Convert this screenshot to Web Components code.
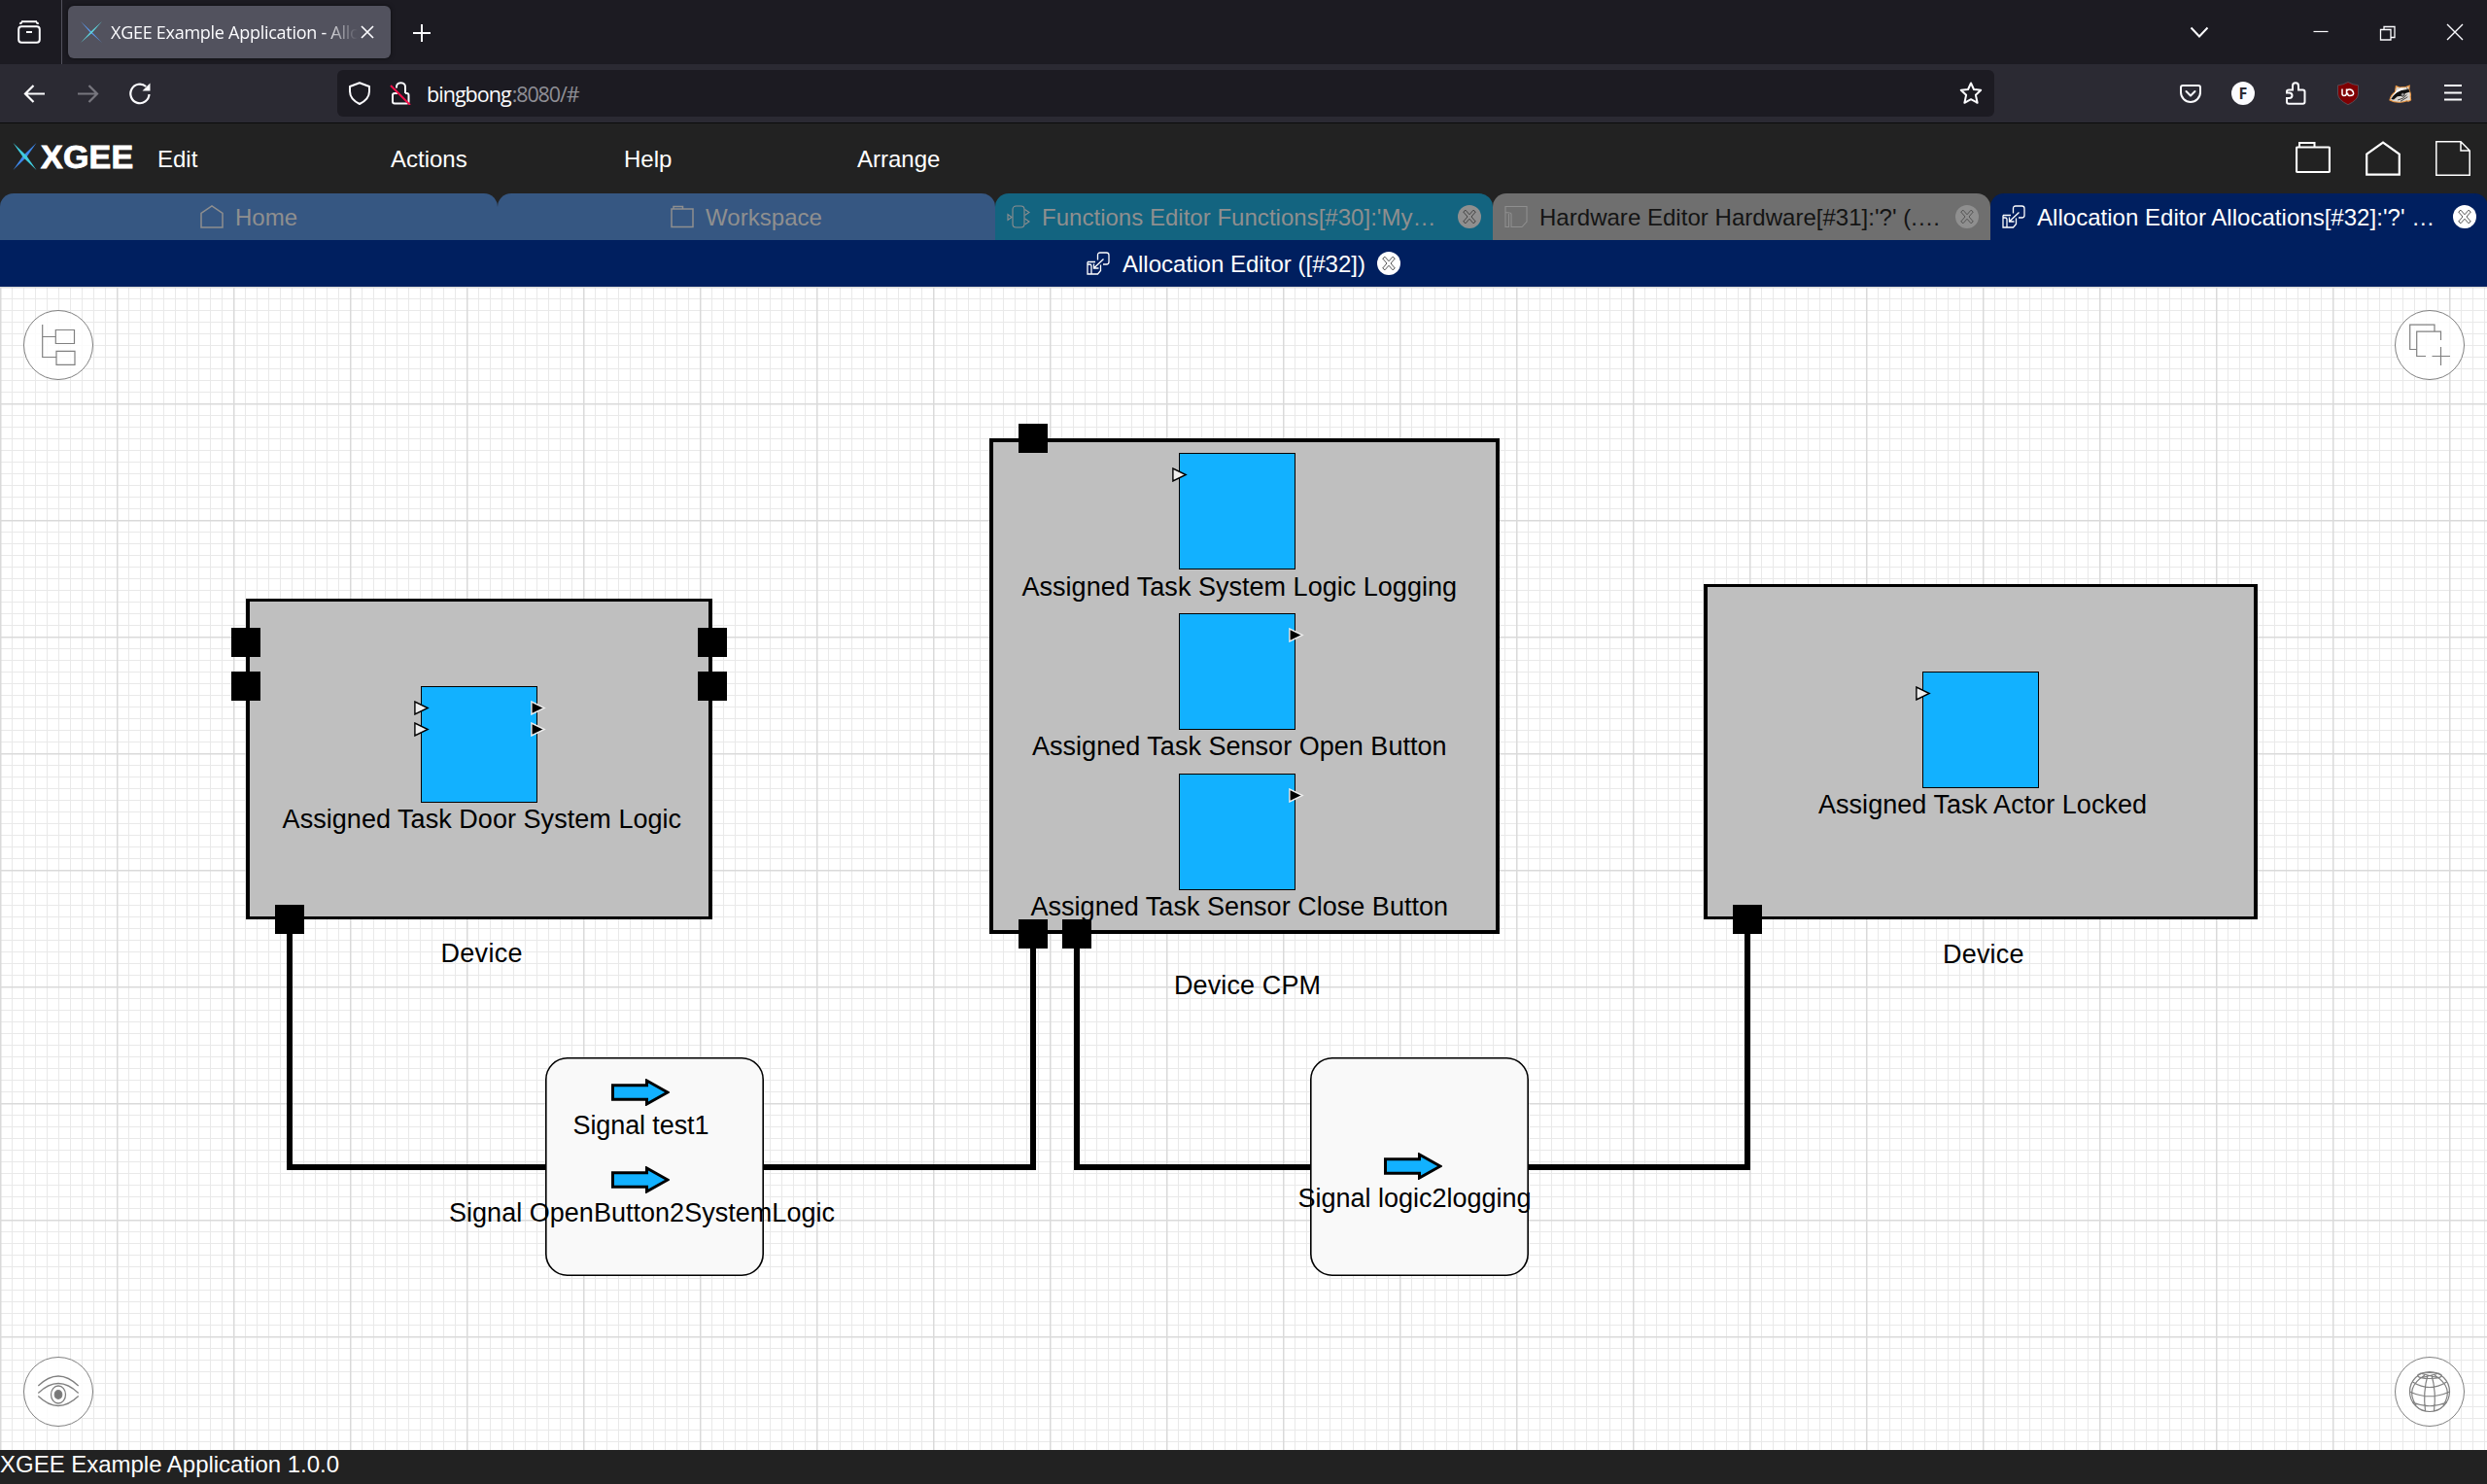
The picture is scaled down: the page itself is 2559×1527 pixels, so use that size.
<!DOCTYPE html>
<html lang="en">
<head>
<meta charset="utf-8">
<title>XGEE Example Application</title>
<style>
html,body{margin:0;padding:0;width:2559px;height:1527px;overflow:hidden;background:#fff;font-family:"Liberation Sans",Arial,sans-serif}
</style>
</head>
<body>
<xgee-window></xgee-window>
<script>
const ICONS = {
library:['0 0 24 24','<path d="M4 1.2h16" /><rect x="1.2" y="6.2" width="21.6" height="16.6" rx="3"/><path d="M5 2.2q-2 0-2.2 1.6M19 2.2q2 0 2.200 1.600M9 12h6"/>',2],
xmark:['0 0 24 24','<path d="M1 1L12.500 12L23 23L10.500 12Z" fill="#5b9df5" stroke="none"/><path d="M23 1L13 12.500L1 23L11.500 11.500Z" fill="#5ed4dc" stroke="none"/>',1],
logo:['0 0 25 28','<path d="M24.500 0L14.300 14.800L.5 28L10.700 13.200Z" fill="#3d86e8" stroke="none"/><path d="M.5 0L14.300 13.200L24.500 28L10.700 14.800Z" fill="#3fcbdc" stroke="none"/>',1],
close:['0 0 24 24','<path d="M6 6l12 12M18 6L6 18"/>',1.7],
plus:['0 0 24 24','<path d="M12 3v18M3 12h18"/>',2],
back:['0 0 24 24','<path d="M2 12.500h20M10.500 4L2 12.500L10.500 21"/>',2.2],
fwd:['0 0 24 24','<path d="M2 12.500h20M13.500 4L22 12.500L13.500 21"/>',2.2],
reload:['0 0 24 24','<path d="M21.500 13a9.600 9.800 0 1 1-3.300-8"/><path d="M22.500 1.500v8h-8z" fill="currentColor" stroke="none"/>',2.2],
shield:['0 0 24 24','<path d="M12 1.200L22 5v5c0 6-4 10-10 13C6 20 2 16 2 10V5z" stroke-linejoin="round"/>',2],
lock:['0 0 24 24','<path d="M8 6.500Q7.500 1.200 12.500 1.200T17 6.500V12"/><path d="M17 12h1.500q2 0 2 2v6.500q0 2-2 2H6q-2 0-2-2V14q0-2 2-2h3"/><path d="M2 4L22 24" stroke="#f4104a"/>',2],
star:['0 0 24 24','<path d="M12 1.500l3 6.500 7.200.7-5.300 5.100 1.700 8L12 18.200 5.400 21.800l1.700-8L1.800 8.700 9 8z" stroke-linejoin="round"/>',2],
chev:['0 0 24 24','<path d="M3.500 7.500L12 16.500L20.500 7.500"/>',2],
min:['0 0 24 24','<path d="M4.500 11.500h15"/>',1.2],
restore:['0 0 24 24','<path d="M4.500 9.500h10.500v10.500H4.500zM8 9V6.500h11v11h-3.500"/>',1.3],
winclose:['0 0 24 24','<path d="M4 4L20 20M20 4L4 20"/>',1.4],
pocket:['0 0 24 24','<path d="M4 4h16q2 0 2 2v5a10 10 0 0 1-20 0V6q0-2 2-2zM7.500 10l4.500 4.500L16.500 10" stroke-linecap="round" stroke-linejoin="round"/>',2],
puzzle:['0 0 24 24','<path d="M9 8.500V4.500Q9 1.300 12 1.300T15 4.500V8.500H19.500q2 0 2 2V20.700q0 2-2 2H5q-2 0-2-2V17H5.500Q8.500 17 8.500 14.300T5.500 11.500H3V10q0-1.500 2-1.500z"/>',2],
ublock:['0 0 24 24','<path d="M12 .5Q17 3.300 22.500 3.800V13Q22 19 12 23.700Q2 19 1.500 13V3.800Q7 3.300 12 .5z" fill="#7f0003" stroke="#5a5560" stroke-width=".8"/><path d="M6 7.500v5q0 2 2 2t2.500-2v-5M10.500 12.500V10.500q0-2.500 3-2.500t4 3.200-4 3.300q-2 0-2-3" stroke="#fff" stroke-width="1.500"/>',1],
badger:['0 0 26 24','<path d="M1 19.500Q2 14 7 10.500L8 4l4 1.500 7-.5 4-1.500-.5 4.500q2.500 5 1.500 7.500l.5 4q-2 2-4.500 1-3 1.500-7 1.500-7 .5-12-2.500z" fill="#dcd8d2" stroke="#e8923d" stroke-width="1.200"/><path d="M2.500 18.500Q6 12 13 9l9-1.500 1.500 3-5 1.500-4 3-5 .5-4 3.500z" fill="#111" stroke="none"/><path d="M8 9.500l5-3.500 5 .5-9 4.500-5 4z" fill="#fff" stroke="none"/><circle cx="15.500" cy="13.500" r="2" fill="#999" stroke="#111" stroke-width=".8"/><path d="M10 19.500l6-2 4-4M13 21l8-5M20 6l2 3" stroke="#333" stroke-width="1"/>',1],
menu:['0 0 24 24','<path d="M3 4h18M3 11.500h18M3 18.500h18"/>',2.2],
folder:['0 0 36 36','<path d="M4 6V2H19.500V6" stroke-width="2"/><path d="M2 6.500h32q1 0 1 1V31q0 1-1 1H2q-1 0-1-1V7.500q0-1 1-1z"/>',2.2],
home:['0 0 36 36','<path d="M1.200 34.700V13.500L18 1.500L34.800 13.500V34.700Z"/>',2.2],
file:['0 0 36 36','<path d="M.8.8H26L35.200 10V35.200H.8ZM26 .8V10h9.200"/>',1.5],
tfolder:['0 0 24 24','<path d="M3 4V1.500H12.500V4M1 4h22v18.500H1z"/>',1.500],
thome:['0 0 24 24','<path d="M1 23V8.500L12 1L23 8.500V23Z"/>',1.500],
func:['0 0 24 24','<rect x="6" y="1" width="12" height="22" rx="3.500"/><path d="M1 9.500v6l4-3zM18.500 4.500l4.500 3-4.500 3M18.500 14l4.500 3-4.500 3"/>',1.100],
hard:['0 0 24 24','<path d="M1 1.500H23V17L18 22.500H7V9.500Q7 8 5.500 8L1 7.500zM1 6.500V22.500H4.500V9"/>',1.100],
alloc:['0 0 24 24','<path d="M11.500 8.500V3.500Q11.500 1 14 1H20.500Q23 1 23 3.500V10.500Q23 13 20.500 13H17"/><path d="M1 10.500H9M1 10.500V23H5V14.500Q5 13 3 13H1M5 23H11.500L14.500 19.500V13.500M17.500 7.500L8 16.500M7.500 12.500V17H12.500"/>',1.300],
tree:['0 0 72 72','<path d="M19.700 15V48.500H33.500M19.700 27.500H33.300M33.300 20.500H52.500V34.500H33.300zM34 42.300H53V56.300H34z"/>',1.200],
copy:['0 0 72 72','<path d="M41 22V15.200H15.700V40.500H22.500M47.500 31V22.200H22.700V47.500H32M47.500 38V57M38.500 47.500H57"/>',1.200],
eye:['0 0 72 72','<path d="M15.300 30Q36 10 56.700 30M15.300 37.500Q36 17.500 56.700 37.500M15.300 40.500Q36 60.500 56.700 40.500"/><ellipse cx="36" cy="39" rx="7.500" ry="9"/><ellipse cx="36" cy="39" rx="3.700" ry="4.300" fill="#777"/>',1.300],
globe:['0 0 72 72','<circle cx="36" cy="36" r="20.500"/><ellipse cx="36" cy="19.500" rx="12.500" ry="3"/><path d="M31 19Q10 32 22 50M34 19Q29 36 31.500 56M38 19Q43 36 40.500 56M41 19Q62 32 50 50M18.500 26Q36 37 53.500 26M15.500 36Q36 45.500 56.500 36M18.500 47Q36 54.500 53.500 47M26 17l20 5M46 17l-20 5"/>',1.200]
};
const define=(name,cls)=>customElements.define(name,cls);
class Base extends HTMLElement{
  a(n,d=''){return this.hasAttribute(n)?this.getAttribute(n):d}
  connectedCallback(){
    if(!this.shadowRoot)this.attachShadow({mode:'open'}).innerHTML=this.render();
    this.ready&&this.ready();
  }
}
const meter=document.createElement('canvas').getContext('2d');

define('ui-icon',class extends Base{
  render(){const [vb,body,sw]=ICONS[this.a('name')];const w=this.a('w','24'),h=this.a('h',w);
    return `<style>:host{display:block;flex:none;width:${w}px;height:${h}px}svg{display:block}</style><svg width="${w}" height="${h}" viewBox="${vb}" fill="none" stroke="currentColor" stroke-width="${sw}">${body}</svg>`}
});
/* Text run whose tracking is adjusted so that its ink is "w" pixels wide. */
define('fit-text',class extends Base{
  render(){return '<style>:host{display:block;flex:none;white-space:pre}</style><slot></slot>'}
  ready(){
    const cs=getComputedStyle(this),t=this.textContent,w=+this.a('w','0');
    meter.font=`${cs.fontWeight} ${cs.fontSize} ${cs.fontFamily}`;
    const m=meter.measureText(t),ink=m.actualBoundingBoxRight+m.actualBoundingBoxLeft;
    if(w)this.style.letterSpacing=((w-ink)/(t.length-1)).toFixed(3)+'px';
    this.style.marginLeft=(parseFloat(this.a('dx','0')))+'px';
  }
});
define('close-badge',class extends Base{
  render(){const c=this.a('line','#222');
   return `<style>:host{display:block;flex:none;width:24px;height:24px}svg{display:block}</style><svg width="24" height="24" viewBox="0 0 24 24"><circle cx="12" cy="12" r="12" fill="currentColor"/><path d="M12 9.800L16 5.200L18.300 7L14 12L18.300 17L16 18.800L12 14.200L8 18.800L5.700 17L10 12L5.700 7L8 5.200Z" fill="none" stroke="${c}" stroke-width="1"/></svg>`}
});
define('browser-tabs',class extends Base{
  render(){return `<style>
  :host{display:flex;align-items:center;height:66px;background:#1c1b22;color:#fbfbfe;font-family:"Open Sans","Noto Sans",sans-serif;box-sizing:border-box;padding-right:21px}
  .lib{display:flex;align-items:center;height:66px;border-right:1px solid #52515c;padding-left:18px;box-sizing:border-box;width:64px}
  .tab{display:flex;align-items:center;width:332px;height:54px;margin-left:6px;background:#52525e;border-radius:6px;box-sizing:border-box;padding-left:12px;box-shadow:0 0 4px #0008}
  .t{width:254px;margin-left:8px;overflow:hidden;font-size:18px;-webkit-mask-image:linear-gradient(90deg,#000 86%,#0000);mask-image:linear-gradient(90deg,#000 86%,#0000)}
  .sp{flex:1}.wc{display:flex;gap:45px;margin-left:101px}</style>
  <div class="lib"><ui-icon name="library"></ui-icon></div>
  <div class="tab"><ui-icon name="xmark"></ui-icon><div class="t"><fit-text w="256">XGEE Example Application - Allo</fit-text></div><ui-icon name="close" style="margin-left:-2px"></ui-icon></div>
  <ui-icon name="plus" style="margin-left:20px;margin-top:2px"></ui-icon><div class="sp"></div><ui-icon name="chev"></ui-icon>
  <div class="wc"><ui-icon name="min"></ui-icon><ui-icon name="restore"></ui-icon><ui-icon name="winclose"></ui-icon></div>`}
});
define('browser-toolbar',class extends Base{
  render(){return `<style>
  :host{display:flex;align-items:center;height:61px;background:#2b2a33;border-bottom:1px solid #0c0c0d;color:#fbfbfe;box-sizing:border-box;padding:0 23px 0 24px;font-family:"Open Sans","Noto Sans",sans-serif}
  .nav,.ext{display:flex;gap:30px}
  .url{display:flex;align-items:center;width:1705px;height:48px;margin-left:191px;border-radius:6px;background:#1c1b22;box-sizing:border-box;padding:0 12px 0 11px;font-size:21.5px}
  .url fit-text{margin-top:1px}
  .sp{flex:1}
  .f{display:flex;align-items:center;justify-content:center;width:24px;height:24px;border-radius:50%;background:#fbfbfe;color:#2b2a33;font:bold 16px "Open Sans"}</style>
  <div class="nav"><ui-icon name="back"></ui-icon><ui-icon name="fwd" style="color:#77767e"></ui-icon><ui-icon name="reload"></ui-icon></div>
  <div class="url"><ui-icon name="shield"></ui-icon><ui-icon name="lock" style="margin-left:18px"></ui-icon><fit-text w="87" dx="15">bingbong</fit-text><fit-text w="69" dx="1" style="color:#8f8f96">:8080/#</fit-text><div class="sp"></div><ui-icon name="star"></ui-icon></div>
  <div class="sp"></div>
  <div class="ext"><ui-icon name="pocket"></ui-icon><div class="f">F</div><ui-icon name="puzzle"></ui-icon><ui-icon name="ublock"></ui-icon><ui-icon name="badger"></ui-icon><ui-icon name="menu"></ui-icon></div>`}
});
define('app-header',class extends Base{
  render(){return `<style>
  :host{display:flex;align-items:center;height:72px;background:#222;color:#fff;box-sizing:border-box;padding:0 17px 0 13px;font-size:24px}
  .brand{display:flex;align-items:center;width:149px}
  .brand ui-icon{margin-top:-4px}
  .name{font:bold 34px "Liberation Sans";line-height:40px;margin-top:-5px;-webkit-text-stroke:.9px #fff}
  nav{display:flex;flex:1;padding-top:1px}nav div{width:240px}.r{display:flex;gap:36px}</style>
  <div class="brand"><ui-icon name="logo" w="25" h="28"></ui-icon><fit-text class="name" w="94.5" dx="4">XGEE</fit-text></div>
  <nav><div>Edit</div><div>Actions</div><div>Help</div><div>Arrange</div></nav>
  <div class="r"><ui-icon name="folder" w="36"></ui-icon><ui-icon name="home" w="36"></ui-icon><ui-icon name="file" w="36"></ui-icon></div>`}
});
define('editor-tab',class extends Base{
  render(){const c=this.hasAttribute('closable'),centered=this.hasAttribute('centered');
  return `<style>:host{display:flex;align-items:center;height:48px;flex:none;width:512px;box-sizing:border-box;padding:0 12px;font-size:24px;border-radius:14px 14px 0 0;${centered?'justify-content:center;gap:12px;':''}}
  fit-text{padding-top:1px}.sp{flex:1}</style>
  <ui-icon name="${this.a('icon')}"></ui-icon><fit-text dx="${this.a('dx',centered?'0':'12')}" ${this.a('w')?`w="${this.a('w')}"`:''}>${this.a('label')}</fit-text>
  ${c?(centered?'':'<div class="sp"></div>')+`<close-badge line="${this.a('line')}"></close-badge>`:''}`}
});
define('tab-strip',class extends Base{
  render(){return `<style>:host{display:block;height:96px;background:#222}
  .row{display:flex;overflow:hidden;height:48px}.sub{background:#001f5f;display:flex;justify-content:center}</style>
  <div class="row">
  <editor-tab centered icon="thome" label="Home" style="background:#365782;color:#8f8f8f"></editor-tab>
  <editor-tab centered icon="tfolder" label="Workspace" w="119.5" style="background:#365782;color:#8f8f8f"></editor-tab>
  <editor-tab closable icon="func" label="Functions Editor Functions[#30]:'My…" w="401.500" line="#444" style="background:#136480;color:#8f8f8f"></editor-tab>
  <editor-tab closable icon="hard" label="Hardware Editor Hardware[#31]:'?' (.…" w="409" line="#555" style="background:#6f6f6f;color:#8f8f8f"></editor-tab>
  <editor-tab closable icon="alloc" label="Allocation Editor Allocations[#32]:'?' …" w="407.500" line="#555" style="background:#001f5f;color:#fff"></editor-tab></div>
  <div class="sub"><editor-tab centered closable icon="alloc" dx="1" label="Allocation Editor ([#32])" w="249" line="#555" style="color:#fff"></editor-tab></div>`}
  ready(){const h=this.shadowRoot.querySelector('[icon=hard]');h.shadowRoot.querySelector('fit-text').style.color='#141414'}
});
/* Diagram elements: placed freely on the canvas by x/y. */
class Placed extends Base{
  box(extra=''){return `<style>:host{display:block;position:absolute;box-sizing:border-box;left:${this.a('x')}px;top:${this.a('y')}px;width:${this.a('w')}px;height:${this.a('h')}px;${extra}}</style>`}
}
define('device-node',class extends Placed{render(){return this.box(`background:#bfbfbf;border:4px solid #000;border-width:${this.a('bt','3')}px 4px`)}});
define('device-port',class extends Base{render(){return `<style>:host{display:block;position:absolute;left:${this.a('x')}px;top:${this.a('y')}px;width:30px;height:30px;background:#000}</style>`}});
define('task-node',class extends Base{render(){return `<style>:host{display:block;position:absolute;box-sizing:border-box;left:${this.a('x')}px;top:${this.a('y')}px;width:120px;height:120px;background:#12b1ff;border:1px solid #000}</style>`}});
define('task-pin',class extends Base{render(){const o=this.hasAttribute('out');return `<style>:host{display:block;position:absolute;left:${this.a('x')}px;top:${this.a('y')}px}svg{display:block}</style><svg width="16" height="15"><path d="M.9 1V14L14.200 7.500Z" fill="${o?'#000':'#eee'}" stroke="${o?'#eee':'#000'}" stroke-width="1.400"/></svg>`}});
define('bus-node',class extends Base{render(){return `<style>:host{display:block;position:absolute;left:${this.a('x')}px;top:${this.a('y')}px}svg{display:block}</style><svg width="225" height="225"><rect x=".8" y=".8" width="223.400" height="223.400" rx="22" fill="#f9f9f9" stroke="#000" stroke-width="1.600"/></svg>`}});
define('signal-arrow',class extends Base{render(){return `<style>:host{display:block;position:absolute;left:${this.a('x')}px;top:${this.a('y')}px}svg{display:block}</style><svg width="60" height="28"><path d="M1.500 6.700H36.500V2L58 14L36.500 26V21.300H1.500Z" fill="#12b1ff" stroke="#000" stroke-width="3"/></svg>`}});
define('wire-layer',class extends Base{render(){return `<style>:host{display:block;position:absolute;inset:0}svg{display:block}</style><svg width="2559" height="1197"><g transform="translate(0 -295)" fill="none" stroke="#000" stroke-width="6"><path d="M298 950V1201H562M785 1201H1063V965M1108 965V1201H1350M1572 1201H1798V950"/></g></svg>`}});
/* Label placed by ink start, baseline and ink width. */
define('node-label',class extends Base{
  render(){return `<style>:host{display:block;position:absolute;white-space:pre;font-size:27px;line-height:32px;color:#000}</style>${this.a('text')}`}
  ready(){const t=this.a('text');meter.font='27px "Liberation Sans"';const m=meter.measureText(t);
    this.style.left=(+this.a('x')+m.actualBoundingBoxLeft)+'px';this.style.top=(+this.a('y')-25)+'px';
    this.style.letterSpacing=((+this.a('w')-m.actualBoundingBoxLeft-m.actualBoundingBoxRight)/(t.length-1)).toFixed(3)+'px'}
});
define('round-button',class extends Base{render(){return `<style>:host{display:block;position:absolute;left:${this.a('x')}px;top:${this.a('y')}px;width:72px;height:72px;box-sizing:border-box;border-radius:50%;border:1px solid #808080;background:#ffffffcc;color:#808080}ui-icon{margin:-1px}</style><ui-icon name="${this.a('icon')}" w="72"></ui-icon>`}});
define('diagram-canvas',class extends Base{
  render(){
    let minor='';for(let i=1;i<10;i++)minor+=`<rect x="${i*12}" y="0" width="1" height="120"/><rect x="0" y="${i*12}" width="120" height="1"/>`;
    const Y=v=>v-295;
    const L=(x,b,w,t)=>`<node-label x="${x}" y="${Y(b)}" w="${w}" text="${t}"></node-label>`;
    const P=(x,y)=>`<device-port x="${x}" y="${Y(y)}"></device-port>`;
    const T=(x,y)=>`<task-node x="${x}" y="${Y(y)}"></task-node>`;
    const N=(x,y,o='')=>`<task-pin ${o} x="${x}" y="${Y(y)}"></task-pin>`;
    const S=(x,y)=>`<signal-arrow x="${x}" y="${Y(y)}"></signal-arrow>`;
    return `<style>:host{display:block;position:relative;height:1197px;overflow:hidden;background:#fff}.g{display:block}</style>
    <svg class="g" width="2559" height="1197"><defs><pattern id="g" width="120" height="120" patternUnits="userSpaceOnUse"><g fill="#e9e9e9">${minor}</g><path d="M0 0H120V1.500H0ZM0 0H1.500V120H0Z" fill="#dadada"/></pattern></defs><rect width="2559" height="1197" fill="url(#g)"/></svg>
    <wire-layer></wire-layer>
    <device-node x="253" y="${Y(616)}" w="480" h="330"></device-node>
    <device-node x="1018" y="${Y(451)}" w="525" h="510" bt="4"></device-node>
    <device-node x="1753" y="${Y(601)}" w="570" h="345"></device-node>
    ${T(433,706)}${T(1213,466)}${T(1213,631)}${T(1213,796)}${T(1978,691)}
    ${N(426,721)}${N(426,743)}${N(546,721,'out')}${N(546,743,'out')}${N(1206,481)}${N(1326,646,'out')}${N(1326,811,'out')}${N(1971,706)}
    <bus-node x="561" y="${Y(1088)}"></bus-node><bus-node x="1348" y="${Y(1088)}"></bus-node>
    ${S(629,1110)}${S(629,1200)}${S(1424,1186)}
    ${L(290.6,852,410.500,'Assigned Task Door System Logic')}${L(455.500,990,81,'Device')}
    ${L(1051.5,613,447,'Assigned Task System Logic Logging')}${L(1062,777,426,'Assigned Task Sensor Open Button')}${L(1060.500,942,429,'Assigned Task Sensor Close Button')}${L(1210,1023,147.500,'Device CPM')}
    ${L(1871,837,339,'Assigned Task Actor Locked')}${L(2001,991,80.500,'Device')}
    ${L(590.500,1167,138,'Signal test1')}${L(463,1257,395.500,'Signal OpenButton2SystemLogic')}${L(1336.500,1242,238,'Signal logic2logging')}
    ${P(238,646)}${P(238,691)}${P(718,646)}${P(718,691)}${P(283,931)}${P(1048,436)}${P(1048,946)}${P(1093,946)}${P(1783,931)}
    <round-button icon="tree" x="24" y="${Y(319)}"></round-button><round-button icon="copy" x="2464" y="${Y(319)}"></round-button>
    <round-button icon="eye" x="24" y="${Y(1396)}"></round-button><round-button icon="globe" x="2464" y="${Y(1396)}"></round-button>`}
});
define('status-bar',class extends Base{render(){return `<style>:host{display:flex;align-items:center;height:35px;box-sizing:border-box;padding-bottom:5px;background:#222;color:#fff;font-size:24px}</style><fit-text w="350">XGEE Example Application 1.0.0</fit-text>`}});
define('xgee-window',class extends Base{render(){return `<style>:host{display:flex;flex-direction:column;width:2559px;height:1527px;overflow:hidden}</style><browser-tabs></browser-tabs><browser-toolbar></browser-toolbar><app-header></app-header><tab-strip></tab-strip><diagram-canvas></diagram-canvas><status-bar></status-bar>`}});
</script>
</body>
</html>
